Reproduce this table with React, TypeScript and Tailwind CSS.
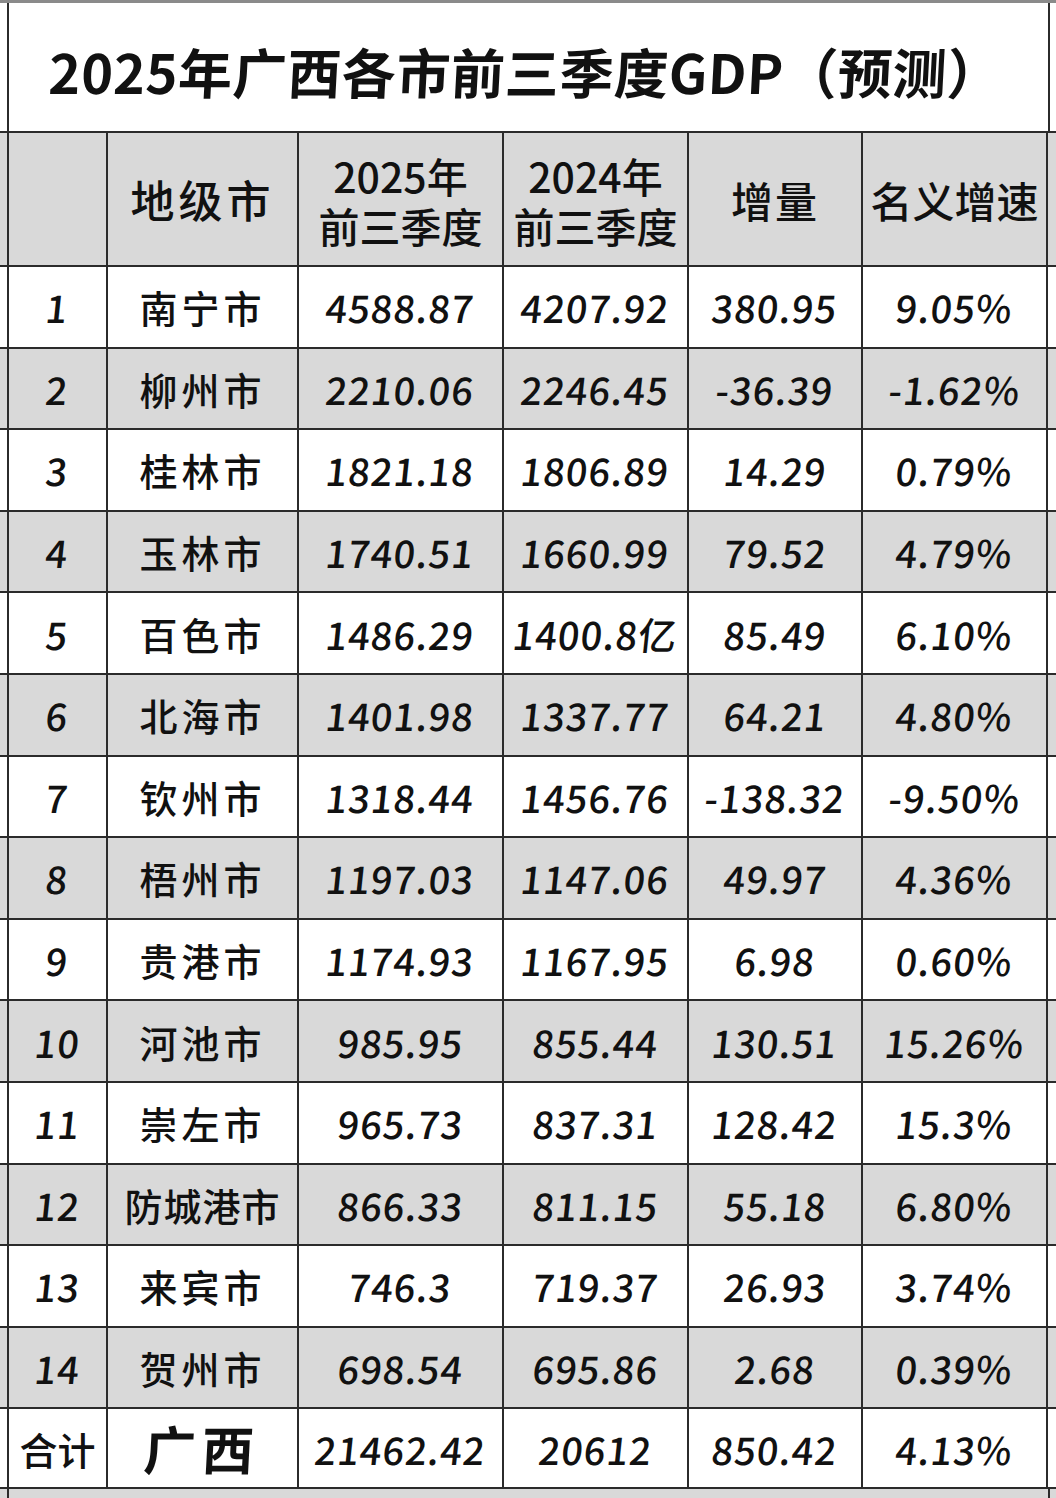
import React from 'react';

type Row = [string, string, string, string, string, string];

const rows: Row[] = [
    ['1', '南宁市', '4588.87', '4207.92', '380.95', '9.05%'],
    ['2', '柳州市', '2210.06', '2246.45', '-36.39', '-1.62%'],
    ['3', '桂林市', '1821.18', '1806.89', '14.29', '0.79%'],
    ['4', '玉林市', '1740.51', '1660.99', '79.52', '4.79%'],
    ['5', '百色市', '1486.29', '1400.8亿', '85.49', '6.10%'],
    ['6', '北海市', '1401.98', '1337.77', '64.21', '4.80%'],
    ['7', '钦州市', '1318.44', '1456.76', '-138.32', '-9.50%'],
    ['8', '梧州市', '1197.03', '1147.06', '49.97', '4.36%'],
    ['9', '贵港市', '1174.93', '1167.95', '6.98', '0.60%'],
    ['10', '河池市', '985.95', '855.44', '130.51', '15.26%'],
    ['11', '崇左市', '965.73', '837.31', '128.42', '15.3%'],
    ['12', '防城港市', '866.33', '811.15', '55.18', '6.80%'],
    ['13', '来宾市', '746.3', '719.37', '26.93', '3.74%'],
    ['14', '贺州市', '698.54', '695.86', '2.68', '0.39%'],
];

const widths = ['w-[99px]', 'w-[191px]', 'w-[205px]', 'w-[185px]', 'w-[174px]', 'w-[187px]'];

const Cell = ({ i, children }: { i: number; children: React.ReactNode }) => (
    <div
        className={`${widths[i]} flex h-full shrink-0 items-center justify-center border-l-2 border-[#2b2b2b] ${
            i === 5 ? 'border-r-2' : ''
        }`}
    >
        {children}
    </div>
);

const Num = ({ v }: { v: string }) => (
    <span className="inline-block -skew-x-6 text-[38px] font-medium tracking-[1px] text-[#111]">{v}</span>
);

// two-line header: "2025年 / 前三季度"
const TwoLine = ({ top }: { top: string }) => (
    <div className="flex flex-col items-center pt-[2px] text-[41px] font-medium">
        <span className="block h-[50px] leading-[50px]">{top}</span>
        <span className="block h-[50px] leading-[50px]">前三季度</span>
    </div>
);

export default function App() {
    return (
        <div
            className="h-[1498px] w-[1056px] overflow-hidden bg-white text-[#111]"
            style={{ fontFamily: '"Noto Sans CJK SC", "Noto Sans", sans-serif' }}
        >
            {/* Title */}
            <div className="flex h-[131px] border-t-[3px] border-[#8a8a8a]">
                <div className="w-[7px] shrink-0" />
                <div className="flex w-[1043px] shrink-0 items-center border-x-2 border-[#2b2b2b] pt-[6px] pl-[40px]">
                    <span className="-skew-x-3 text-[54px] font-bold tracking-[0.5px]">2025年广西各市前三季度GDP（预测）</span>
                </div>
            </div>

            {/* Header */}
            <div className="flex h-[136px] border-y-2 border-[#2b2b2b] bg-[#d9d9d9]">
                <div className="w-[7px] shrink-0" />
                <Cell i={0}>{''}</Cell>
                <Cell i={1}>
                    <span className="text-[44px] font-medium tracking-[4px]">地级市</span>
                </Cell>
                <Cell i={2}>
                    <TwoLine top="2025年" />
                </Cell>
                <Cell i={3}>
                    <TwoLine top="2024年" />
                </Cell>
                <Cell i={4}>
                    <span className="text-[42px] font-medium tracking-[2px]">增量</span>
                </Cell>
                <Cell i={5}>
                    <span className="text-[42px] font-medium">名义增速</span>
                </Cell>
            </div>

            {/* Data rows */}
            {rows.map((r, idx) => (
                <div
                    key={r[0]}
                    className={`flex h-[81.6px] border-b-2 border-[#2b2b2b] ${idx % 2 === 1 ? 'bg-[#d9d9d9]' : 'bg-white'}`}
                >
                    <div className="w-[7px] shrink-0" />
                    <Cell i={0}>
                        <Num v={r[0]} />
                    </Cell>
                    <Cell i={1}>
                        <span className={`text-[38px] font-medium ${r[1].length > 3 ? 'tracking-[1px]' : 'tracking-[4px]'}`}>
                            {r[1]}
                        </span>
                    </Cell>
                    <Cell i={2}>
                        <Num v={r[2]} />
                    </Cell>
                    <Cell i={3}>
                        <Num v={r[3]} />
                    </Cell>
                    <Cell i={4}>
                        <Num v={r[4]} />
                    </Cell>
                    <Cell i={5}>
                        <Num v={r[5]} />
                    </Cell>
                </div>
            ))}

            {/* Total */}
            <div className="flex h-[80px] border-b-2 border-[#2b2b2b] bg-white">
                <div className="w-[7px] shrink-0" />
                <Cell i={0}>
                    <span className="text-[38px] font-medium">合计</span>
                </Cell>
                <Cell i={1}>
                    <span className="inline-block -skew-x-3 text-[52px] font-bold tracking-[6px]">广西</span>
                </Cell>
                <Cell i={2}>
                    <Num v="21462.42" />
                </Cell>
                <Cell i={3}>
                    <Num v="20612" />
                </Cell>
                <Cell i={4}>
                    <Num v="850.42" />
                </Cell>
                <Cell i={5}>
                    <Num v="4.13%" />
                </Cell>
            </div>

            {/* Bottom strip */}
            <div className="flex h-[20px] bg-[#d9d9d9]">
                <div className="w-[7px] shrink-0" />
                <div className="w-[1043px] shrink-0 border-x-2 border-[#2b2b2b]" />
            </div>
        </div>
    );
}
